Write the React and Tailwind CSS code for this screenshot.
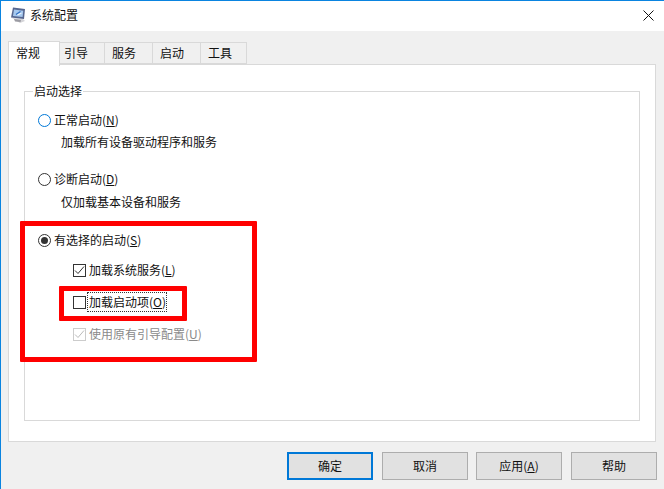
import React from 'react';

const font = 'font-["Noto_Sans_CJK_SC","Noto_Sans",sans-serif]';

const tabs = [
  { label: '引导', w: 'w-[45px] pl-[4px]' },
  { label: '服务', w: 'w-[48px] pl-[7px]' },
  { label: '启动', w: 'w-[48px] pl-[7px]' },
  { label: '工具', w: 'w-[46px] pl-[7px]' },
];

const SystemIcon = () => (
  <svg width="16" height="17" viewBox="0 0 16 17">
    <path d="M2 11 L10 16 L15 14 L13 12 Z" fill="#d4d4d8" />
    <path d="M3 0.500 L15 2 L14 12 L1 10.500 Z" fill="#56668f" />
    <path d="M4 2.500 L13.300 3.700 L12.600 10 L3 9 Z" fill="#a6c8ee" />
    <path d="M6 7.500 L10.500 4.500" stroke="#2f6fc4" strokeWidth="1.300" />
    <path d="M7.500 8 L11.500 6" stroke="#eef6fd" strokeWidth="1.200" />
    <path d="M4 12 L11 13 L10.500 15 L5 14.500 Z" fill="#9a9aa2" />
  </svg>
);

const Radio = ({ checked, blue, label, mnemonic }) => (
  <div className="flex h-[20px] items-center">
    <span
      className={`flex h-[13px] w-[13px] items-center justify-center rounded-full border bg-white ${
        blue ? 'border-[#0078d7]' : 'border-[#333333]'
      }`}
    >
      {checked && <span className="h-[7px] w-[7px] rounded-full bg-[#333333]" />}
    </span>
    <span className="ml-[3px] text-[12px] text-[#111111]">
      {label}(<span className="underline">{mnemonic}</span>)
    </span>
  </div>
);

const Checkbox = ({ checked, disabled, focused, label, mnemonic }) => (
  <div className="flex h-[20px] items-center">
    <span
      className={`flex h-[13px] w-[13px] items-center justify-center border bg-white ${
        disabled ? 'border-[#cccccc]' : 'border-[#333333]'
      }`}
    >
      {checked && (
        <svg width="11" height="11" viewBox="0 0 11 11" fill="none">
          <path d="M1 5.500 L4 8.500 L10 1.500" stroke={disabled ? '#bbbbbb' : '#333333'} strokeWidth="1" />
        </svg>
      )}
    </span>
    <span
      className={`ml-[2px] pl-[1px] text-[12px] leading-[18px] ${disabled ? 'text-[#8a8a8a]' : 'text-[#111111]'} ${
        focused ? 'outline-1 outline-dotted outline-[#333333]' : ''
      }`}
    >
      {label}(<span className="underline">{mnemonic}</span>)
    </span>
  </div>
);

const DialogButton = ({ primary, children }) => (
  <button
    className={`flex h-[28px] w-[86px] items-center justify-center bg-[#e1e1e1] pb-[1px] text-[12px] text-[#111111] ${
      primary ? 'border-2 border-[#0078d7]' : 'border border-[#adadad]'
    }`}
  >
    {children}
  </button>
);

export default function App() {
  return (
    <div className={`${font} flex h-[489px] w-[664px] flex-col overflow-hidden border-t border-l border-[#0a84e0] bg-[#f0f0f0]`}>
      {/* title bar */}
      <div className="flex h-[30px] shrink-0 items-center justify-between bg-white pr-[10px] pb-[2px] pl-[9px]">
        <div className="flex items-center gap-[4px]">
          <SystemIcon />
          <span className="text-[12px] text-[#111111]">系统配置</span>
        </div>
        <svg width="11" height="11" viewBox="0 0 11 11" stroke="#111111" strokeWidth="1">
          <path d="M0.500 0.500 L10.500 10.500 M10.500 0.500 L0.500 10.500" />
        </svg>
      </div>

      {/* tabs */}
      <div className="relative z-10 ml-[7px] mt-[9px] flex h-[24px] items-end">
        <div className="flex h-[25px] w-[52px] translate-y-[1px] items-center self-start border border-b-0 border-[#d9d9d9] bg-white pb-[3px] pl-[7px] text-[12px] text-[#111111]">
          常规
        </div>
        {tabs.map((tab) => (
          <div
            key={tab.label}
            className={`flex h-[22px] ${tab.w} items-center border border-l-0 border-[#d9d9d9] bg-[#f0f0f0] text-[12px] text-[#111111]`}
          >
            {tab.label}
          </div>
        ))}
      </div>

      {/* tab panel */}
      <div className="ml-[7px] h-[378px] w-[648px] border border-[#d9d9d9] bg-white pt-[18px] pl-[15px]">
        <fieldset className="relative h-[338px] w-[616px] border border-[#d9d9d9]">
          <legend className="ml-[8px] h-[16px] px-[1px] text-[12px] leading-[16px] text-[#111111]">启动选择</legend>
          <div className="flex flex-col pt-[11px] pl-[13px]">
            <Radio blue label="正常启动" mnemonic="N" />
            <div className="mt-[2px] flex h-[20px] items-center pl-[23px] text-[12px] text-[#111111]">加载所有设备驱动程序和服务</div>
            <div className="mt-[17px]">
              <Radio label="诊断启动" mnemonic="D" />
            </div>
            <div className="mt-[3px] flex h-[20px] items-center pl-[23px] text-[12px] text-[#111111]">仅加载基本设备和服务</div>
            <div className="mt-[18px]">
              <Radio checked label="有选择的启动" mnemonic="S" />
            </div>
            <div className="mt-[10px] flex flex-col gap-[12px] pl-[35px]">
              <Checkbox checked label="加载系统服务" mnemonic="L" />
              <Checkbox focused label="加载启动项" mnemonic="O" />
              <Checkbox checked disabled label="使用原有引导配置" mnemonic="U" />
            </div>
          </div>

          {/* red annotation frames */}
          <div className="absolute top-[122px] left-[-5px] h-[141px] w-[237px] rounded-[1px] border-[5px] border-[#ff0000]" />
          <div className="absolute top-[187px] left-[34px] h-[35px] w-[128px] rounded-[1px] border-[5px] border-[#ff0000]" />
        </fieldset>
      </div>

      {/* buttons */}
      <div className="mt-[10px] flex pl-[286px]">
        <DialogButton primary>确定</DialogButton>
        <div className="ml-[9px]"><DialogButton>取消</DialogButton></div>
        <div className="ml-[8px]">
          <DialogButton>应用(<span className="underline">A</span>)</DialogButton>
        </div>
        <div className="ml-[9px]"><DialogButton>帮助</DialogButton></div>
      </div>
    </div>
  );
}
